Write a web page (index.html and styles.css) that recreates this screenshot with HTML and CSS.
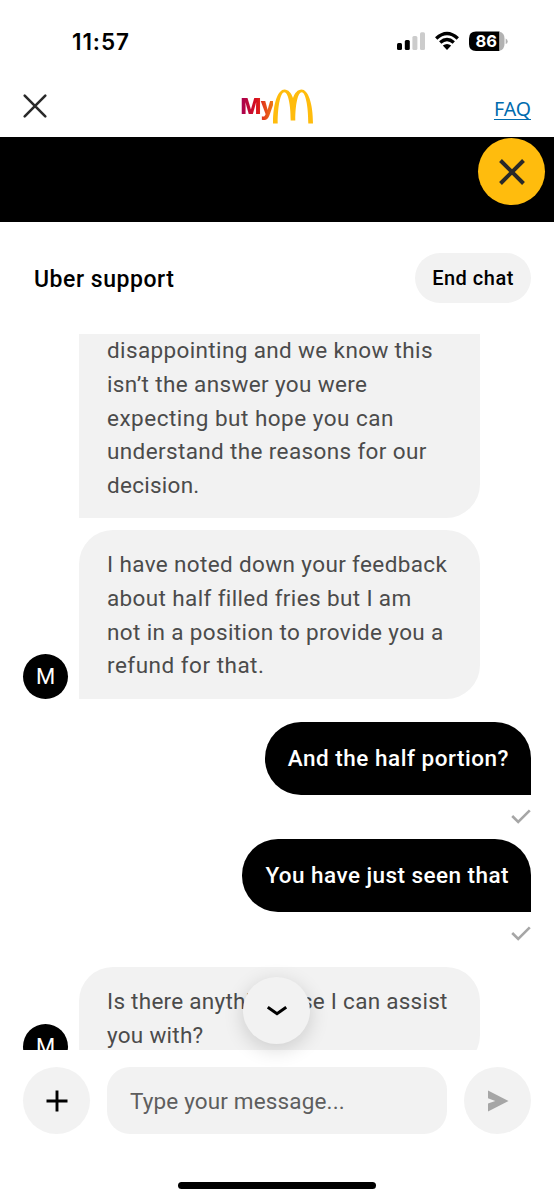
FILE: index.html
```html
<!DOCTYPE html>
<html lang="en">
<head>
<meta charset="utf-8">
<title>Uber support</title>
<link rel="stylesheet" href="styles.css">
</head>
<body>
<div class="screen">
  <div class="status">
    <span class="time">11:57</span>
    <svg class="indicators" width="112" height="22" viewBox="0 0 112 22">
      <rect x="0" y="12" width="5" height="7" rx="1.5"/>
      <rect x="7.8" y="9" width="5" height="10" rx="1.5"/>
      <g fill="#ccc"><rect x="15.4" y="5" width="5" height="14" rx="1.5"/><rect x="23" y="1.3" width="5" height="17.7" rx="1.5"/></g>
      <g fill="none" stroke="#000" stroke-width="3.4"><path d="M39.2 7.5Q50 -2.5 60.8 7.5"/><path d="M43.2 11.6Q50 5.6 56.8 11.6"/></g>
      <path d="M45.8 14.6Q50 11.2 54.2 14.6L50 19Z"/>
      <path d="M79 0.5H102.5V20H79Q72 20 72 13V7.5Q72 .5 79 .5Z"/>
      <path d="M102.5 .8Q107.5 2 107.5 7.5V13Q107.5 18.5 102.5 19.8Z" fill="#b2b2b2"/>
      <path d="M108.7 7.5Q110.7 8.5 110.7 10.5T108.7 13Z" fill="#b2b2b2"/>
      <text class="battery-text" x="89.3" y="16.2" text-anchor="middle">86</text>
    </svg>
  </div>
  <div class="nav">
    <svg width="26" height="26" viewBox="0 0 26 26"><path d="M2.7 2.7 23.3 23.3M23.3 2.7 2.7 23.3" fill="none" stroke="#292929" stroke-width="2.6" stroke-linecap="round"/></svg>
    <div class="brand">
      <span class="my">My</span>
      <svg width="40" height="35" viewBox="0 0 40 35"><path d="M0 34.5C0 14 5 .5 11.5 .5C15.3 .5 18.3 4 20 9C21.7 4 24.7 .5 28.5 .5C35 .5 40 14 40 34.5H35.3C35.3 16 32.3 3.3 28.7 3.3C25 3.3 22.3 15 22.3 31.5H17.7C17.7 15 15 3.3 11.3 3.3C7.7 3.3 4.7 16 4.7 34.5Z" fill="#ffbc0d"/></svg>
    </div>
    <a class="faq">FAQ</a>
  </div>
  <div class="banner">
    <div class="close"><svg width="28" height="28" viewBox="0 0 28 28"><path d="M2.5 2.5 25.5 25.5M25.5 2.5 2.5 25.5" fill="none" stroke="#292929" stroke-width="4"/></svg></div>
  </div>
  <div class="head">
    <span class="title">Uber support</span>
    <span class="end"><span>End chat</span></span>
  </div>
  <div class="chat">
    <div class="agent first">
      <div class="bubble square-top"><span class="snug">disappointing and we know this</span><span class="snug">isn’t the answer you were</span><span>expecting but hope you can</span><span class="snug">understand the reasons for our</span><span class="tight">decision.</span></div>
    </div>
    <div class="agent">
      <div class="avatar">M</div>
      <div class="bubble square-left"><span class="snug">I have noted down your feedback</span><span class="snug">about half filled fries but I am</span><span class="snug">not in a position to provide you a</span><span>refund for that.</span></div>
    </div>
    <div class="user"><div class="reply wide"><span>And the half portion?</span></div>
      <svg class="tick" width="20" height="15" viewBox="0 0 20 15"><path d="M1.2 7 7.2 13 18.8 1.3" fill="none" stroke="#a6a6a6" stroke-width="2.6"/></svg></div>
    <div class="user"><div class="reply"><span>You have just seen that</span></div>
      <svg class="tick" width="20" height="15" viewBox="0 0 20 15"><path d="M1.2 7 7.2 13 18.8 1.3" fill="none" stroke="#a6a6a6" stroke-width="2.6"/></svg></div>
    <div class="agent last">
      <div class="avatar">M</div>
      <div class="bubble square-left"><span class="tight">Is there anything else I can assist</span><span class="tight">you with?</span></div>
    </div>
  </div>
  <div class="composer">
    <div class="round"><svg width="22" height="22" viewBox="0 0 22 22"><path d="M11 .5V21.5M.5 11H21.5" stroke="#000" stroke-width="2.9"/></svg></div>
    <div class="input"><span>Type your message...</span></div>
    <div class="round"><svg width="22" height="22" viewBox="0 0 22 22"><path d="M1 .6 21.5 11 1 21.4V13.6L8.3 11 1 8.2Z" fill="#a6a6a6"/></svg></div>
  </div>
  <div class="home"></div>
  <div class="scroll-down"><svg width="20" height="12" viewBox="0 0 20 12"><path d="M.8 2.2 10 8.7 19.2 2.2" fill="none" stroke="#000" stroke-width="3"/></svg></div>
</div>
</body>
</html>
```
FILE: styles.css
```css
* { box-sizing: border-box; }
body { margin: 0; background: #fff; font-family: Roboto, "Noto Sans", sans-serif; color: #000; }
svg { display: block; flex: none; }
span { white-space: nowrap; }
.screen { position: relative; width: 554px; height: 1200px; overflow: hidden; display: flex; flex-direction: column; }
.status { height: 76px; flex: none; display: flex; justify-content: space-between; padding: 31px 45px 0 72px; }
.time { font: 600 22.5px/21px Inter, sans-serif; letter-spacing: .9px; }
.battery-text { font: 700 16.5px Inter, sans-serif; fill: #fff; }
.nav { height: 61px; flex: none; display: grid; grid-template-columns: 1fr auto 1fr; align-items: center; padding: 0 23px 1px 22px; }
.brand { display: flex; align-items: center; width: 73px; }
.my { font: 800 22.5px/28px "Open Sans", sans-serif; letter-spacing: -1px; width: 33px; background: linear-gradient(90deg, #a30056, #d9101c 50%, #ef7b16); -webkit-background-clip: text; background-clip: text; color: transparent; }
.faq { justify-self: end; font: 400 19.5px/25px "Noto Sans", sans-serif; color: #006bae; text-decoration: underline; text-decoration-thickness: 1px; text-underline-offset: 3px; padding-top: 5px; }
.banner { height: 85px; flex: none; background: #000; display: flex; justify-content: flex-end; padding: 1px 9px; }
.close { width: 67px; height: 67px; border-radius: 50%; background: #ffbc0d; display: grid; place-items: center; }
.head { height: 112px; flex: none; display: flex; align-items: center; justify-content: space-between; padding: 0 23px 0 34px; }
.title { font-weight: 500; font-size: 23px; letter-spacing: .53px; padding-top: 3px; }
.end { width: 116px; height: 50px; border-radius: 25px; background: #f2f2f2; display: grid; place-items: center; font-weight: 500; font-size: 20px; letter-spacing: .5px; }
.chat { height: 716px; flex: none; overflow: hidden; }
.agent { display: flex; align-items: flex-end; padding-left: 23px; margin-bottom: 23px; gap: 11px; }
.agent.first { padding-left: 79px; margin-bottom: 12px; height: 184px; }
.avatar { width: 45px; height: 45px; border-radius: 50%; background: #000; color: #fff; display: grid; place-items: center; font-size: 22px; flex: none; }
.bubble { width: 401px; padding: 18px 28px 16px; background: #f2f2f2; color: #4b4b4b; border-radius: 34px; font-size: 22.5px; line-height: 33.8px; letter-spacing: .5px; }
.bubble span { display: block; }
.bubble .snug { letter-spacing: .37px; }
.bubble .tight { letter-spacing: .27px; }
.square-left { border-bottom-left-radius: 0; }
.square-top { border-radius: 0 0 34px 0; height: 184px; padding-top: 0; }
.user { display: flex; flex-direction: column; align-items: flex-end; padding-right: 23px; height: 117px; }
.reply { height: 73px; padding: 0 22px 2px 23px; background: #000; color: #fff; border-radius: 36px 36px 0 36px; display: flex; align-items: center; font-size: 22.5px; font-weight: 500; letter-spacing: .45px; }
.reply.wide { letter-spacing: .52px; }
.tick { margin-top: 14px; }
.agent.last { margin-top: 11px; }
.composer { height: 101px; flex: none; display: flex; gap: 17px; padding: 17px 23px; }
.round { width: 67px; height: 67px; border-radius: 50%; background: #f2f2f2; display: grid; place-items: center; flex: none; }
.input { flex: 1; height: 67px; border-radius: 23px; background: #f2f2f2; color: #5e5e5e; padding-left: 23px; display: flex; align-items: center; font-size: 22.5px; letter-spacing: .15px; }
.home { width: 198px; height: 7px; border-radius: 4px; background: #000; margin: 31px 0 0 178px; flex: none; }
.scroll-down { position: absolute; left: 243px; top: 977px; width: 67px; height: 67px; border-radius: 50%; background: #f2f2f2; box-shadow: 0 5px 20px rgba(0,0,0,.16); display: grid; place-items: center; }
```
